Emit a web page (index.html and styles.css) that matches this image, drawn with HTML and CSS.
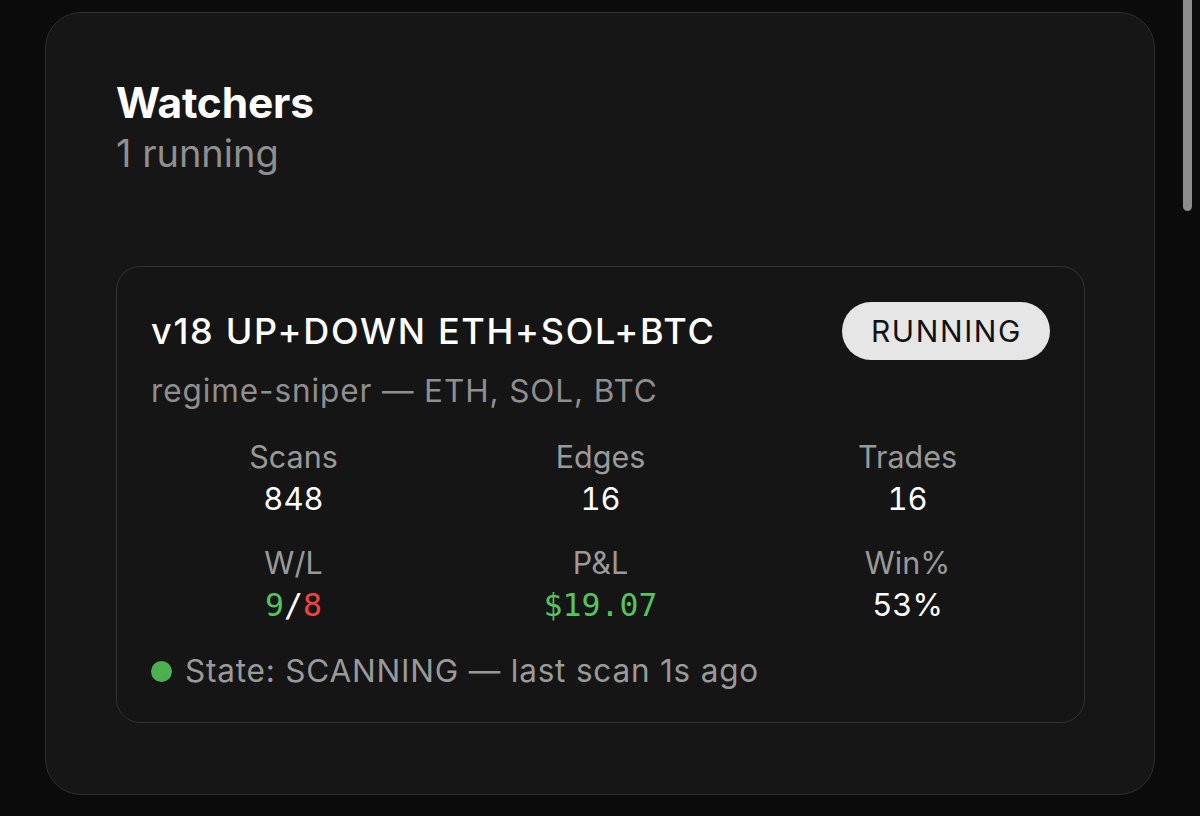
FILE: index.html
```html
<!DOCTYPE html>
<html>
<head>
<meta charset="utf-8">
<link rel="stylesheet" href="styles.css">
</head>
<body>
<div class="panel">
  <div class="panel-head">
    <h1 class="panel-title">Watchers</h1>
    <div class="panel-sub">1 running</div>
  </div>
  <div class="watcher">
    <div class="watcher-head">
      <div class="watcher-title">v18 UP+DOWN ETH+SOL+BTC</div>
      <div class="pill">RUNNING</div>
    </div>
    <div class="watcher-sub">regime-sniper — ETH, SOL, BTC</div>
    <div class="stats">
      <div class="stat"><div class="stat-label">Scans</div><div class="stat-value">848</div></div>
      <div class="stat"><div class="stat-label">Edges</div><div class="stat-value">16</div></div>
      <div class="stat"><div class="stat-label">Trades</div><div class="stat-value">16</div></div>
      <div class="stat"><div class="stat-label">W/L</div><div class="stat-value mono"><span class="win">9</span>/<span class="loss">8</span></div></div>
      <div class="stat"><div class="stat-label">P&amp;L</div><div class="stat-value mono win">$19.07</div></div>
      <div class="stat"><div class="stat-label">Win%</div><div class="stat-value">53%</div></div>
    </div>
    <div class="state"><span class="dot"></span>State: SCANNING — last scan 1s ago</div>
  </div>
</div>
<div class="scrollbar"></div>
</body>
</html>
```
FILE: styles.css
```css
html, body {
  margin: 0;
  padding: 0;
  background: #0b0b0b;
}
body {
  padding: 12px 45px 0 45px;
  font-family: Inter, "Noto Sans", sans-serif;
  color: #fff;
  height: 816px;
  box-sizing: border-box;
  overflow: hidden;
}
.panel {
  background: #161616;
  border: 1.5px solid #2f2f2f;
  border-radius: 36px;
  padding: 69px 69px 71px 70px;
  height: 783px;
  box-sizing: border-box;
}
.panel-title {
  margin: 0;
  font-size: 42.5px;
  font-weight: 700;
  line-height: 1;
  letter-spacing: -0.2px;
}
.panel-sub {
  margin-top: 8px;
  font-size: 38px;
  line-height: 1.1;
  color: #8f8f8f;
}
.watcher {
  margin-top: 92px;
  background: #151515;
  border: 1.5px solid #333;
  border-radius: 24px;
  padding: 35px 34px 30px 34px;
}
.watcher-head {
  display: flex;
  align-items: center;
  justify-content: space-between;
}
.watcher-title {
  font-size: 36px;
  font-weight: 500;
  line-height: 1.2;
  letter-spacing: 1.7px;
}
.pill {
  background: #e6e6e6;
  color: #111;
  font-size: 30px;
  line-height: 58px;
  height: 58px;
  padding: 0 28px 0 29px;
  border-radius: 29px;
  letter-spacing: 1.6px;
}
.watcher-sub {
  margin-top: 12px;
  font-size: 31.5px;
  line-height: 1.2;
  color: #8f8f8f;
  letter-spacing: 0.9px;
}
.stats {
  margin-top: 26px;
  display: grid;
  grid-template-columns: repeat(3, 307px);
  justify-content: center;
  row-gap: 23px;
  text-align: center;
}
.stat-label {
  font-size: 30.5px;
  line-height: 1.4;
  color: #9a9a9a;
}
.stat-value {
  font-size: 31px;
  line-height: 1.3;
  color: #fff;
  font-variant-numeric: tabular-nums;
}
.mono {
  font-family: "DejaVu Sans Mono", "Liberation Mono", monospace;
  font-size: 31.5px;
}
.win { color: #55c35e; }
.loss { color: #ef4444; }
.state {
  margin-top: 25px;
  display: flex;
  align-items: center;
  gap: 13px;
  font-size: 31.5px;
  line-height: 1.3;
  color: #9a9a9a;
  letter-spacing: 0.8px;
}
.dot {
  width: 21px;
  height: 21px;
  border-radius: 50%;
  background: #4caf50;
}
.scrollbar {
  position: absolute;
  left: 1183px;
  top: 0;
  width: 9px;
  height: 211px;
  border-radius: 0 0 5px 5px;
  background: #8c8c8c;
}
```
